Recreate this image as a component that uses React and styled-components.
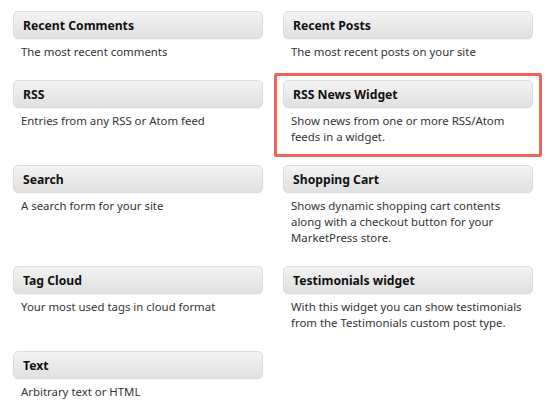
import React from "react";
import styled, { createGlobalStyle } from "styled-components";

const Global = createGlobalStyle`
  html, body { margin: 0; padding: 0; background: #fff; }
  body { font-family: "Noto Sans", "DejaVu Sans", sans-serif; }
`;

const Grid = styled.div`
  display: grid;
  grid-template-columns: 250px 250px;
  column-gap: 20px;
  padding: 11px 0 0 13px;
  align-items: start;
`;

const Widget = styled.div`
  position: relative;
  padding-bottom: 20px;
  ${(p) =>
    p.$highlighted &&
    `
    &::after {
      content: "";
      position: absolute;
      left: -9px;
      right: -9px;
      top: -7px;
      bottom: 8px;
      border: 3px solid #f4605a;
      border-radius: 2px;
      pointer-events: none;
    }
  `}
`;

const Header = styled.div`
  height: 26px;
  display: flex;
  align-items: center;
  padding: 0 9px;
  border: 1px solid #dcdcdc;
  border-radius: 5px;
  background: linear-gradient(to bottom, #f3f3f3, #e0e0e0);
  box-shadow: 0 1px 1px rgba(0, 0, 0, 0.04);
  font-size: 12.2px;
  font-weight: bold;
  color: #111;
`;

const Desc = styled.p`
  margin: 5px 0 0;
  padding: 0 4px 0 8px;
  font-size: 11.4px;
  line-height: 16px;
  color: #333;
`;

const widgets = [
  ["Recent Comments", "The most recent comments"],
  ["Recent Posts", "The most recent posts on your site"],
  ["RSS", "Entries from any RSS or Atom feed"],
  ["RSS News Widget", "Show news from one or more RSS/Atom feeds in a widget.", true],
  ["Search", "A search form for your site"],
  ["Shopping Cart", "Shows dynamic shopping cart contents along with a checkout button for your MarketPress store."],
  ["Tag Cloud", "Your most used tags in cloud format"],
  ["Testimonials widget", "With this widget you can show testimonials from the Testimonials custom post type."],
  ["Text", "Arbitrary text or HTML"],
];

export default function App() {
  return (
    <>
      <Global />
      <Grid>
        {widgets.map(([title, desc, hl]) => (
          <Widget key={title} $highlighted={hl}>
            <Header>{title}</Header>
            <Desc>{desc}</Desc>
          </Widget>
        ))}
      </Grid>
    </>
  );
}
